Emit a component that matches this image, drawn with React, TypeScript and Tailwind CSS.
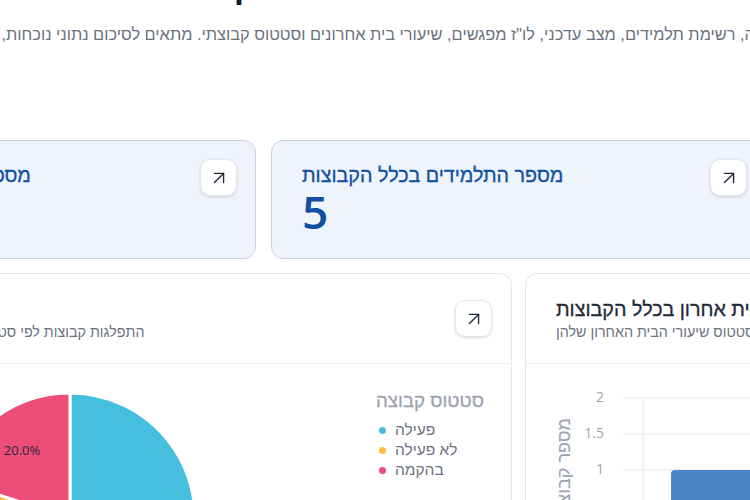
import { ArrowUpRight } from 'lucide-react'

const hebrew = "font-['Liberation_Sans','Open_Sans',sans-serif]"

function ExpandButton() {
  return (
    <button className="flex h-[37px] w-[37px] shrink-0 items-center justify-center rounded-[10px] border border-[#e5e7eb] bg-white shadow-[0_1px_3px_rgba(16,24,40,0.15)]">
      <ArrowUpRight size={22} strokeWidth={1.5} className="text-[#1f2937]" />
    </button>
  )
}

function StatCard({ title, value }: { title: string; value?: string }) {
  return (
    <div className="flex h-[119px] items-start justify-between rounded-xl border border-[#c8d2e8] bg-[#eff3fc] pl-[30px] pr-[18px] pt-[18px]">
      <div className="pt-[1px]">
        <h3 className={`${hebrew} text-[19.7px] leading-[30px] text-[#0f4fa0] [-webkit-text-stroke:0.3px_#0f4fa0]`}>{title}</h3>
        {value && <p className="-mt-[2px] text-[46px] font-semibold leading-[46px] text-[#0f4fa0]">{value}</p>}
      </div>
      <ExpandButton />
    </div>
  )
}

function StatusPie() {
  return (
    <svg width="250" height="136" viewBox="0 0 250 136" className="shrink-0">
      <path d="M125 126 L125 1 A125 125 0 1 1 51.5 227.1 Z" fill="#45bfdd" stroke="#fff" strokeWidth="3" />
      <path d="M125 126 L51.5 227.1 A125 125 0 0 1 6.1 87.4 Z" fill="#fbbf3c" stroke="#fff" strokeWidth="3" />
      <path d="M125 126 L6.1 87.4 A125 125 0 0 1 125 1 Z" fill="#ec4e78" stroke="#fff" strokeWidth="3" />
      <text x="77" y="63" textAnchor="middle" fontSize="13" fill="#1f2937">
        20.0%
      </text>
    </svg>
  )
}

const legend = [
  { label: 'פעילה', color: 'bg-[#45bfdd]' },
  { label: 'לא פעילה', color: 'bg-[#fbbf3c]' },
  { label: 'בהקמה', color: 'bg-[#ec4e78]' },
]

function BarChart() {
  return (
    <svg width="225" height="137" viewBox="0 0 225 137" className="block">
      <text
        transform="translate(44 54) rotate(-90)"
        textAnchor="start"
        fontSize="18"
        fill="#9ca3af"
        direction="rtl"
        fontFamily="Liberation Sans"
      >
        מספר קבוצות
      </text>
      {[
        ['2', 34],
        ['1.5', 70],
        ['1', 106],
      ].map(([label, y]) => (
        <g key={label}>
          <line x1="97" x2="225" y1={y} y2={y} stroke="#e5e7eb" />
          <text x="78" y={Number(y) + 4} textAnchor="end" fontSize="14" fill="#9ca3af">
            {label}
          </text>
        </g>
      ))}
      <line x1="117" x2="117" y1="34" y2="137" stroke="#e5e7eb" />
      <path d="M145 137 V110 a4 4 0 0 1 4 -4 H225 V137 Z" fill="#4a86c8" />
    </svg>
  )
}

export default function App() {
  return (
    <div className="h-[500px] w-[750px] overflow-hidden bg-white font-['Open_Sans','Noto_Sans',sans-serif]">
      <div className="-ml-[239px] -mt-[36px] w-[1300px]">
        <h1 className={`${hebrew} ml-[380px] whitespace-nowrap text-[36px] font-bold leading-[44px] text-[#111827]`}>דוח קבוצות</h1>
        <p
          dir="rtl"
          className={`${hebrew} mt-[16px] w-[1074px] whitespace-nowrap text-[16.36px] leading-[20px] text-[#6b7280]`}
        >
          נתוני הקבוצה, רשימת תלמידים, מצב עדכני, לו"ז מפגשים, שיעורי בית אחרונים וסטטוס קבוצתי. מתאים לסיכום נתוני נוכחות, מעקב והתקדמות
        </p>

        <div className="mt-[96px] grid w-[1005px] grid-cols-2 gap-[15px]">
          <StatCard title="מספר הקבוצות בכל המערכת" />
          <StatCard title="מספר התלמידים בכלל הקבוצות" value="5" />
        </div>

        <div className="mt-[14px] flex gap-[13px]">
          <section className="w-[751px] shrink-0 rounded-xl border border-[#e5e7eb]">
            <header className="flex h-[90px] items-start justify-between border-b border-[#f0f1f3] pl-[30px] pr-[19px] pt-[26px]">
              <div className="pt-[20px]">
                <p className={`${hebrew} text-[14.3px] leading-[24px] text-[#6b7280]`}>התפלגות קבוצות לפי סטטוס פעילות נוכחי של כלל הקבוצות</p>
              </div>
              <ExpandButton />
            </header>
            <div className="flex items-start justify-end pr-[27px] pt-[28px]">
              <div className="mr-[181px]">
                <StatusPie />
              </div>
              <div className="-mt-[3px]">
                <h4 className={`${hebrew} text-[18.7px] leading-[24px] text-[#9ca3af] [-webkit-text-stroke:0.3px_#9ca3af]`}>סטטוס קבוצה</h4>
                <ul className="mt-[7px]">
                  {legend.map((item) => (
                    <li key={item.label} className={`${hebrew} flex h-[20px] items-center gap-[9px] pl-[3px] text-[15.5px] text-[#6b7280]`}>
                      <span className={`h-[7px] w-[7px] rounded-full ${item.color}`} />
                      {item.label}
                    </li>
                  ))}
                </ul>
              </div>
            </div>
          </section>

          <section className="w-[500px] shrink-0 rounded-xl border border-[#e5e7eb]">
            <header className="h-[90px] border-b border-[#f0f1f3] pl-[30px] pt-[21px]">
              <h3 className={`${hebrew} text-[19.7px] leading-[28px] text-[#1f2937] [-webkit-text-stroke:0.3px_#1f2937]`}>סטטוס שיעורי בית אחרון בכלל הקבוצות</h3>
              <p className={`${hebrew} text-[14.3px] leading-[18px] text-[#6b7280]`}>קבוצות לפי סטטוס שיעורי הבית האחרון שלהן</p>
            </header>
            <BarChart />
          </section>
        </div>
      </div>
    </div>
  )
}
